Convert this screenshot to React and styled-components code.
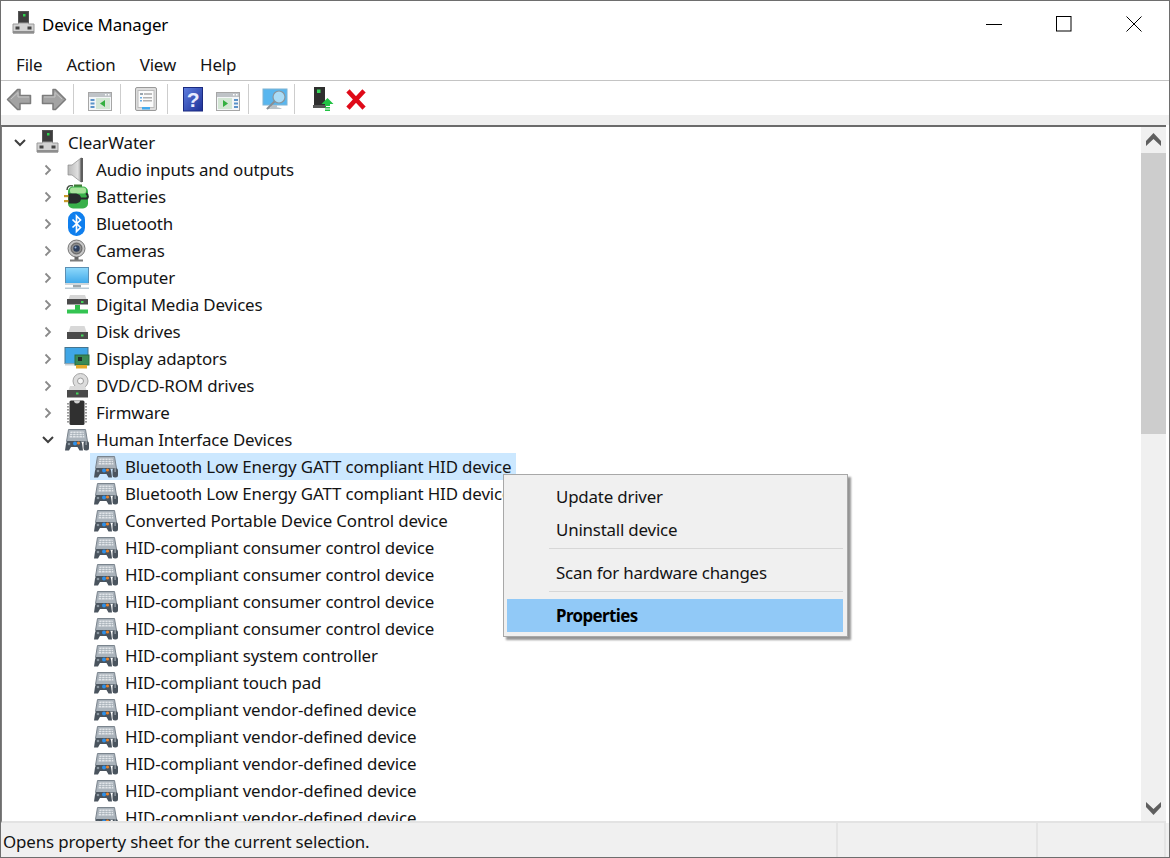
import styled, { createGlobalStyle } from 'styled-components'

const GlobalStyle = createGlobalStyle`
  html, body {
    margin: 0;
    padding: 0;
    background: #fff;
    overflow: hidden;
  }
  * { box-sizing: border-box; }
`

const Window = styled.div`
  width: 1170px;
  height: 858px;
  display: flex;
  flex-direction: column;
  border: 1px solid #6e6e6e;
  background: #fff;
  color: #141414;
  font-family: "Noto Sans", "Open Sans", sans-serif;
  font-size: 16.9px;
  letter-spacing: -0.14px;
  position: relative;
  overflow: hidden;
`

const TitleBar = styled.div`
  height: 51px;
  flex: none;
  display: flex;
  align-items: center;
  padding: 0 0 5px 11px;
`

const TitleText = styled.div`
  margin-left: 4px;
  flex: 1;
  color: #000;
`

const WinButton = styled.div`
  width: 70px;
  height: 100%;
  display: flex;
  align-items: center;
  justify-content: center;
`

const MenuBar = styled.div`
  height: 29px;
  flex: none;
  display: flex;
  gap: 24px;
  padding-left: 15px;
  align-items: center;
  border-bottom: 1px solid #c4c4c4;
  padding-bottom: 3px;
`

const Toolbar = styled.div`
  height: 34px;
  flex: none;
  display: flex;
  align-items: center;
  padding: 2px 0 0 5px;
`

const ToolIcon = styled.div`
  width: 26px;
  height: 26px;
  flex: none;
  margin-left: ${(p) => p.$gap || 0}px;
`

const ToolSep = styled.div`
  width: 1px;
  height: 30px;
  flex: none;
  background: #cdcdcd;
  margin-left: ${(p) => p.$gap}px;
`

const Strip = styled.div`
  height: 10px;
  flex: none;
  background: #f0f0f0;
`

const TreePanel = styled.div`
  flex: 1;
  min-height: 0;
  display: flex;
  border-top: 2px solid #6b6b6b;
  border-left: 1px solid #7d7d7d;
  border-bottom: 2px solid #e3e3e3;
  margin-right: 3px;
`

const Tree = styled.div`
  flex: 1;
  min-width: 0;
  overflow: hidden;
  padding-top: 2px;
`

const Row = styled.div`
  height: 27px;
  display: flex;
  align-items: center;
  padding-left: ${(p) => p.$pad}px;
`

const Chevron = styled.div`
  width: 18px;
  height: 27px;
  flex: none;
  margin-right: 4px;
  display: flex;
  align-items: center;
  justify-content: center;
`

const Label = styled.div`
  height: 27px;
  display: flex;
  align-items: center;
  padding: 0 5px 0 3px;
  white-space: nowrap;
  background: ${(p) => (p.$selected ? '#cce8ff' : 'transparent')};
`

const IconBox = styled.div`
  width: 26px;
  height: 26px;
  flex: none;
  margin-right: 6px;
`

const Scrollbar = styled.div`
  width: 25px;
  flex: none;
  background: #f0f0f0;
  display: flex;
  flex-direction: column;
`

const ScrollButton = styled.div`
  height: ${(p) => p.$height}px;
  flex: none;
  display: flex;
  align-items: center;
  justify-content: center;
  padding-bottom: ${(p) => p.$lift}px;
`

const ScrollThumb = styled.div`
  height: 281px;
  flex: none;
  background: #cdcdcd;
`

const ScrollTrack = styled.div`
  flex: 1;
`

const StatusBar = styled.div`
  height: 34px;
  flex: none;
  display: flex;
  background: #f0f0f0;
`

const StatusCell = styled.div`
  width: ${(p) => p.$width}px;
  flex: none;
  padding: 3px 0 0 2px;
  display: flex;
  align-items: center;
  white-space: nowrap;
  border-right: 2px solid #e4e4e4;
`

const ContextMenu = styled.div`
  position: absolute;
  left: 502px;
  top: 473px;
  width: 345px;
  height: 163px;
  background: #f0f0f0;
  border: 1px solid #a8a8a8;
  box-shadow: 3px 3px 2px rgba(0, 0, 0, 0.42);
  padding: 5px 4px 0 3px;
`

const MenuItem = styled.div`
  height: 33px;
  display: flex;
  align-items: center;
  padding-left: 49px;
  background: ${(p) => (p.$active ? '#91c9f7' : 'transparent')};
  font-weight: ${(p) => (p.$active ? 700 : 400)};
  letter-spacing: ${(p) => (p.$active ? '-0.6px' : '-0.2px')};
  color: ${(p) => (p.$active ? '#000' : '#141414')};
`

const MenuSep = styled.div`
  height: 1px;
  margin: 2px 0 7px 42px;
  background: #d7d7d7;
`

const Computer = () => (
  <svg width="26" height="26" viewBox="0 0 26 26">
    <rect x="6.500" y="0.500" width="10" height="13" fill="#3d3d3d" stroke="#555" />
    <rect x="11" y="3" width="2.500" height="2.500" fill="#2fd24f" />
    <path d="M1 13h5.500v-1h10v1H22v9H1z" fill="#d2d2d2" stroke="#9a9a9a" />
    <rect x="3.500" y="15.500" width="4" height="3" fill="#444" />
    <rect x="15.500" y="15.500" width="4" height="3" fill="#444" />
    <rect x="1" y="20" width="21" height="2.500" fill="#8e8e8e" />
  </svg>
)

const Audio = () => (
  <svg width="26" height="26" viewBox="0 0 26 26">
    <defs>
      <linearGradient id="spk" x1="0" x2="1" y1="0" y2="0">
        <stop offset="0" stopColor="#b9b9b9" />
        <stop offset="0.7" stopColor="#dfdfdf" />
        <stop offset="1" stopColor="#8a8a8a" />
      </linearGradient>
    </defs>
    <path d="M4 8h4l9-7h1v24h-1l-9-7H4z" fill="url(#spk)" stroke="#8c8c8c" strokeWidth="0.700" />
    <rect x="16.500" y="1" width="2.500" height="24" fill="#5e5e5e" />
  </svg>
)

const Battery = () => (
  <svg width="26" height="26" viewBox="0 0 26 26">
    <path d="M3 6c0-4 3-5 6-4" fill="none" stroke="#3d4a3d" strokeWidth="1.400" />
    <rect x="10" y="0.500" width="8" height="3" fill="#3f7a36" />
    <rect x="4" y="2.500" width="20" height="22" rx="5" fill="#39b04a" />
    <rect x="6" y="3.500" width="16" height="6" rx="2.500" fill="#a7e29a" />
    <rect x="0" y="11" width="5" height="2.200" fill="#c89a2a" />
    <rect x="0" y="16" width="5" height="2.200" fill="#c89a2a" />
    <path d="M4.500 9.500h6c5 0 6.500 2.500 6.500 5s-1.500 5-6.500 5h-6z" fill="#272b2b" />
    <path d="M16.500 14.500h5.500c2.500 0 2.500-4 0-5" fill="none" stroke="#272b2b" strokeWidth="2" />
  </svg>
)

const Bluetooth = () => (
  <svg width="26" height="26" viewBox="0 0 26 26">
    <rect x="4" y="0.500" width="17" height="24.500" rx="8.200" fill="#0f7fee" />
    <path d="M8.500 8.500l8 8-4 4v-15.500l4 4-8 7.500" fill="none" stroke="#fff" strokeWidth="1.700" />
  </svg>
)

const Camera = () => (
  <svg width="26" height="26" viewBox="0 0 26 26">
    <circle cx="12.500" cy="10.500" r="8.500" fill="#c7c7c7" stroke="#777" />
    <circle cx="12.500" cy="10.500" r="5.500" fill="#8c8c8c" stroke="#5b5b5b" />
    <circle cx="12.500" cy="10.500" r="3.200" fill="#2e3f5c" />
    <circle cx="11.500" cy="9.500" r="1" fill="#9db8dd" />
    <rect x="10.500" y="19" width="4" height="3" fill="#666" />
    <rect x="6" y="21.500" width="13" height="2" fill="#7d7d7d" />
  </svg>
)

const Monitor = () => (
  <svg width="26" height="26" viewBox="0 0 26 26">
    <defs>
      <linearGradient id="scr" x1="0" x2="0" y1="0" y2="1">
        <stop offset="0" stopColor="#8fd9fb" />
        <stop offset="1" stopColor="#3fa9ea" />
      </linearGradient>
    </defs>
    <rect x="1.500" y="2.500" width="23" height="16" fill="url(#scr)" stroke="#5b8fb3" />
    <rect x="1" y="18" width="24" height="2" fill="#cfd6da" />
    <rect x="9" y="20" width="8" height="2.500" fill="#9ba6ac" />
    <rect x="1" y="22.500" width="24" height="1.500" fill="#b9c9d3" />
  </svg>
)

const MediaDevice = () => (
  <svg width="26" height="26" viewBox="0 0 26 26">
    <path d="M4.500 7l1.500-4h15l1.500 4z" fill="#d6d6d6" />
    <rect x="3" y="7" width="21" height="5.500" fill="#4a4a4a" />
    <rect x="17" y="9" width="2.500" height="2" fill="#43d65a" />
    <rect x="11" y="13" width="5" height="5" fill="#2fbf4a" />
    <rect x="3" y="17.500" width="21" height="4" fill="#34c452" />
  </svg>
)

const Disk = () => (
  <svg width="26" height="26" viewBox="0 0 26 26">
    <path d="M4.500 13l2-6h14l2 6z" fill="#d8d8d8" />
    <rect x="3" y="13" width="21" height="7" fill="#4a4a4a" />
    <rect x="17" y="15.500" width="2.500" height="2" fill="#43d65a" />
  </svg>
)

const DisplayAdapter = () => (
  <svg width="26" height="26" viewBox="0 0 26 26">
    <rect x="1" y="1.500" width="23" height="16" fill="#3fa6e6" stroke="#45758f" />
    <rect x="1" y="17.500" width="16" height="2" fill="#c9d2d6" />
    <rect x="11" y="9" width="14" height="10" fill="#3a8a55" stroke="#2a6a40" />
    <rect x="14" y="11" width="4" height="4" fill="#23302a" />
    <rect x="12" y="19" width="11" height="3.500" fill="#e6a92b" />
  </svg>
)

const Dvd = () => (
  <svg width="26" height="26" viewBox="0 0 26 26">
    <circle cx="16.500" cy="8" r="7.500" fill="#dcdcdc" stroke="#a4a4a4" />
    <circle cx="16.500" cy="8" r="3" fill="#f6f6f6" stroke="#9c9c9c" />
    <path d="M4.500 17l1.500-4h15l1.500 4z" fill="#dadada" />
    <rect x="3" y="17" width="21" height="7.500" fill="#4a4a4a" />
    <rect x="12" y="19.500" width="2.500" height="2" fill="#43d65a" />
  </svg>
)

const Firmware = () => (
  <svg width="26" height="26" viewBox="0 0 26 26">
    <rect x="5.500" y="0.500" width="15" height="24.500" rx="1.500" fill="#303030" />
    <path d="M10 0.500h6a3 3 0 0 1-6 0z" fill="#cfcfcf" />
    {[3, 6, 9, 12, 15, 18, 21].map((y) => (
      <g key={y}>
        <rect x="3" y={y} width="2.500" height="1.600" fill="#9a9a9a" />
        <rect x="20.500" y={y} width="2.500" height="1.600" fill="#9a9a9a" />
      </g>
    ))}
  </svg>
)

const Hid = () => (
  <svg width="26" height="26" viewBox="0 0 26 26">
    <path d="M4.500 2.500h17l2 12h-21z" fill="#aab3bb" stroke="#7b858e" />
    <path d="M6.500 4.500h13l1 6h-15z" fill="#e2e6ea" />
    <path d="M6 6.500h14M5.800 8.500h14.500M9 4.500l-.5 6M12 4.500v6M15 4.500v6M18 4.500l.5 6" stroke="#9ba4ac" strokeWidth="0.600" fill="none" />
    <path d="M4 14h12c1.500 0 2 2 2.300 4l.7 5.500h-3.500l-2-3.500H7l-2 3.500H1l.8-5.500C2.200 16 2.600 14 4 14z" fill="#4a545e" />
    <circle cx="11" cy="16.500" r="2" fill="#2f90e8" />
    <circle cx="14.500" cy="16" r="1.600" fill="#e8842f" />
    <circle cx="5" cy="17" r="1.300" fill="#8b97a1" />
    <rect x="19.500" y="14" width="5.500" height="9.500" rx="2.500" fill="#4a545e" />
    <rect x="21.600" y="14" width="1" height="4" fill="#aeb6bd" />
  </svg>
)

const ArrowIcon = ({ flip }) => (
  <svg width="26" height="26" viewBox="0 0 26 26" style={flip ? { transform: 'scaleX(-1)' } : undefined}>
    <path d="M1.500 13.500l10-10h2.500v6h10.500v8H14v6h-2.500z" fill="#a3a3a3" stroke="#7c7c7c" strokeWidth="1.500" strokeLinejoin="round" />
    <path d="M5 13l7-6.500v4.500h11" fill="none" stroke="#c6c6c6" strokeWidth="1" />
  </svg>
)

const PaneIcon = ({ right }) => (
  <svg width="26" height="26" viewBox="0 0 26 26">
    <rect x="1.500" y="6.500" width="23" height="18" fill="#f4f6f8" stroke="#a6a6a6" />
    <rect x="2" y="7" width="22" height="4" fill="#bfc3c7" />
    <rect x="18" y="8" width="1.500" height="1.500" fill="#fff" />
    <rect x="21" y="8" width="1.500" height="1.500" fill="#fff" />
    {right ? (
      <>
        <rect x="3" y="12" width="14" height="11" fill="#d3e6d4" />
        <path d="M8 14l5 3.500-5 3.500z" fill="#33b040" />
        <rect x="19" y="13" width="4" height="2" fill="#5b93c9" />
        <rect x="19" y="16.500" width="4" height="2" fill="#5b93c9" />
        <rect x="19" y="20" width="4" height="2" fill="#5b93c9" />
      </>
    ) : (
      <>
        <rect x="9" y="12" width="14" height="11" fill="#d3e6d4" />
        <path d="M18 14l-5 3.500 5 3.500z" fill="#33b040" />
        <rect x="3.500" y="13" width="4" height="2" fill="#5b93c9" />
        <rect x="3.500" y="16.500" width="4" height="2" fill="#5b93c9" />
        <rect x="3.500" y="20" width="4" height="2" fill="#5b93c9" />
      </>
    )}
  </svg>
)

const SheetIcon = () => (
  <svg width="26" height="26" viewBox="0 0 26 26">
    <rect x="2.500" y="1.500" width="21" height="23" rx="1.500" fill="#dcdcdc" stroke="#9a9a9a" />
    <rect x="5" y="4.500" width="16" height="17" fill="#fbfbfb" stroke="#bcbcbc" />
    <rect x="7" y="7" width="3" height="2" fill="#9aa5ae" />
    <rect x="11" y="7" width="8" height="2" fill="#bdbdbd" />
    <rect x="7" y="11" width="2" height="1.500" fill="#6aaee6" />
    <rect x="10" y="11" width="9" height="1.500" fill="#b0b0b0" />
    <rect x="7" y="14" width="2" height="1.500" fill="#6aaee6" />
    <rect x="10" y="14" width="9" height="1.500" fill="#b0b0b0" />
    <rect x="9" y="21" width="8" height="2.500" fill="#40a9ee" />
  </svg>
)

const HelpIcon = () => (
  <svg width="26" height="26" viewBox="0 0 26 26">
    <defs>
      <linearGradient id="hlp" x1="0" x2="1" y1="0" y2="1">
        <stop offset="0" stopColor="#5f7fe0" />
        <stop offset="1" stopColor="#1c2f96" />
      </linearGradient>
    </defs>
    <rect x="3.500" y="1.500" width="19" height="23.500" fill="url(#hlp)" stroke="#1a2a80" />
    <text x="13" y="20.500" textAnchor="middle" fontFamily="Liberation Sans, sans-serif" fontWeight="700" fontSize="21" fill="#e8ecff">?</text>
  </svg>
)

const ScanIcon = () => (
  <svg width="26" height="26" viewBox="0 0 26 26">
    <rect x="1" y="3" width="24" height="16" fill="#58b6ef" stroke="#7fb4d4" />
    <path d="M9 19h6v2H9zM4 23c2-2 7-2 8-2s5 0 8 2z" fill="#b9c2c8" />
    <circle cx="17" cy="11" r="6" fill="#a9dcf7" stroke="#8a969e" strokeWidth="1.200" />
    <path d="M12.500 15.500L5 23" stroke="#8a8f94" strokeWidth="2" />
  </svg>
)

const UpdateIcon = () => (
  <svg width="26" height="26" viewBox="0 0 26 26">
    <rect x="4" y="1" width="11" height="19" fill="#2e2e2e" />
    <rect x="7" y="3.500" width="3.500" height="3.500" fill="#38d65a" />
    <rect x="3" y="19" width="13" height="3" fill="#555" />
    <path d="M17.500 12l6 6h-3.500v2h-5v-2h-3.500z" fill="#22c244" />
    <rect x="15" y="21" width="5" height="1.500" fill="#22c244" />
    <rect x="15" y="23.500" width="5" height="1.500" fill="#22c244" />
  </svg>
)

const DeleteIcon = () => (
  <svg width="26" height="26" viewBox="0 0 26 26">
    <path d="M6.500 6.500l13 14M19.500 6.500l-13 14" fill="none" stroke="#df0a18" strokeWidth="4.500" strokeLinecap="square" />
  </svg>
)

const ChevronRight = () => (
  <svg width="10" height="12" viewBox="0 0 10 12">
    <path d="M2.500 1.500L7 6l-4.500 4.500" fill="none" stroke="#8a8a8a" strokeWidth="1.800" />
  </svg>
)

const ChevronDown = () => (
  <svg width="12" height="10" viewBox="0 0 12 10">
    <path d="M1 2l5 5 5-5" fill="none" stroke="#3f3f3f" strokeWidth="2" />
  </svg>
)

const ScrollArrow = ({ down }) => (
  <svg width="15" height="13" viewBox="0 0 15 13" style={down ? { transform: 'scaleY(-1)' } : undefined}>
    <path d="M7.500 0L15 8v5L7.500 6 0 13V8z" fill="#5f5f5f" />
  </svg>
)

const categories = [
  ['Audio inputs and outputs', Audio],
  ['Batteries', Battery],
  ['Bluetooth', Bluetooth],
  ['Cameras', Camera],
  ['Computer', Monitor],
  ['Digital Media Devices', MediaDevice],
  ['Disk drives', Disk],
  ['Display adaptors', DisplayAdapter],
  ['DVD/CD-ROM drives', Dvd],
  ['Firmware', Firmware],
]

const hidDevices = [
  'Bluetooth Low Energy GATT compliant HID device',
  'Bluetooth Low Energy GATT compliant HID device',
  'Converted Portable Device Control device',
  'HID-compliant consumer control device',
  'HID-compliant consumer control device',
  'HID-compliant consumer control device',
  'HID-compliant consumer control device',
  'HID-compliant system controller',
  'HID-compliant touch pad',
  'HID-compliant vendor-defined device',
  'HID-compliant vendor-defined device',
  'HID-compliant vendor-defined device',
  'HID-compliant vendor-defined device',
  'HID-compliant vendor-defined device',
]

function App() {
  return (
    <Window>
      <GlobalStyle />
      <TitleBar>
        <Computer />
        <TitleText>Device Manager</TitleText>
        <WinButton>
          <svg width="16" height="16" viewBox="0 0 16 16"><path d="M0 8.500h16" stroke="#000" /></svg>
        </WinButton>
        <WinButton>
          <svg width="16" height="16" viewBox="0 0 16 16"><rect x="0.500" y="0.500" width="14.500" height="14.500" fill="none" stroke="#000" /></svg>
        </WinButton>
        <WinButton>
          <svg width="16" height="16" viewBox="0 0 16 16"><path d="M.5.500l15 15M15.500.500l-15 15" stroke="#000" /></svg>
        </WinButton>
      </TitleBar>

      <MenuBar>
        <span>File</span>
        <span>Action</span>
        <span>View</span>
        <span>Help</span>
      </MenuBar>

      <Toolbar>
        <ToolIcon><ArrowIcon /></ToolIcon>
        <ToolIcon $gap={9}><ArrowIcon flip /></ToolIcon>
        <ToolSep $gap={6} />
        <ToolIcon $gap={13}><PaneIcon /></ToolIcon>
        <ToolSep $gap={7} />
        <ToolIcon $gap={12}><SheetIcon /></ToolIcon>
        <ToolSep $gap={8} />
        <ToolIcon $gap={12}><HelpIcon /></ToolIcon>
        <ToolIcon $gap={9}><PaneIcon right /></ToolIcon>
        <ToolSep $gap={7} />
        <ToolIcon $gap={13}><ScanIcon /></ToolIcon>
        <ToolSep $gap={6} />
        <ToolIcon $gap={15}><UpdateIcon /></ToolIcon>
        <ToolIcon $gap={7}><DeleteIcon /></ToolIcon>
      </Toolbar>

      <Strip />

      <TreePanel>
        <Tree>
          <Row $pad={9}>
            <Chevron><ChevronDown /></Chevron>
            <Label>
              <IconBox><Computer /></IconBox>
              ClearWater
            </Label>
          </Row>
          {categories.map(([name, Icon]) => (
            <Row $pad={37} key={name}>
              <Chevron><ChevronRight /></Chevron>
              <Label>
                <IconBox><Icon /></IconBox>
                {name}
              </Label>
            </Row>
          ))}
          <Row $pad={37}>
            <Chevron><ChevronDown /></Chevron>
            <Label>
              <IconBox><Hid /></IconBox>
              Human Interface Devices
            </Label>
          </Row>
          {hidDevices.map((name, i) => (
            <Row $pad={66} key={i}>
              <Chevron />
              <Label $selected={i === 0}>
                <IconBox><Hid /></IconBox>
                {name}
              </Label>
            </Row>
          ))}
        </Tree>
        <Scrollbar>
          <ScrollButton $height={26} $lift={2}><ScrollArrow /></ScrollButton>
          <ScrollThumb />
          <ScrollTrack />
          <ScrollButton $height={25} $lift={0}><ScrollArrow down /></ScrollButton>
        </Scrollbar>
      </TreePanel>

      <StatusBar>
        <StatusCell $width={837}>Opens property sheet for the current selection.</StatusCell>
        <StatusCell $width={200} />
        <StatusCell $width={128} />
      </StatusBar>

      <ContextMenu>
        <MenuItem>Update driver</MenuItem>
        <MenuItem>Uninstall device</MenuItem>
        <MenuSep />
        <MenuItem>Scan for hardware changes</MenuItem>
        <MenuSep />
        <MenuItem $active>Properties</MenuItem>
      </ContextMenu>
    </Window>
  )
}

export default App
